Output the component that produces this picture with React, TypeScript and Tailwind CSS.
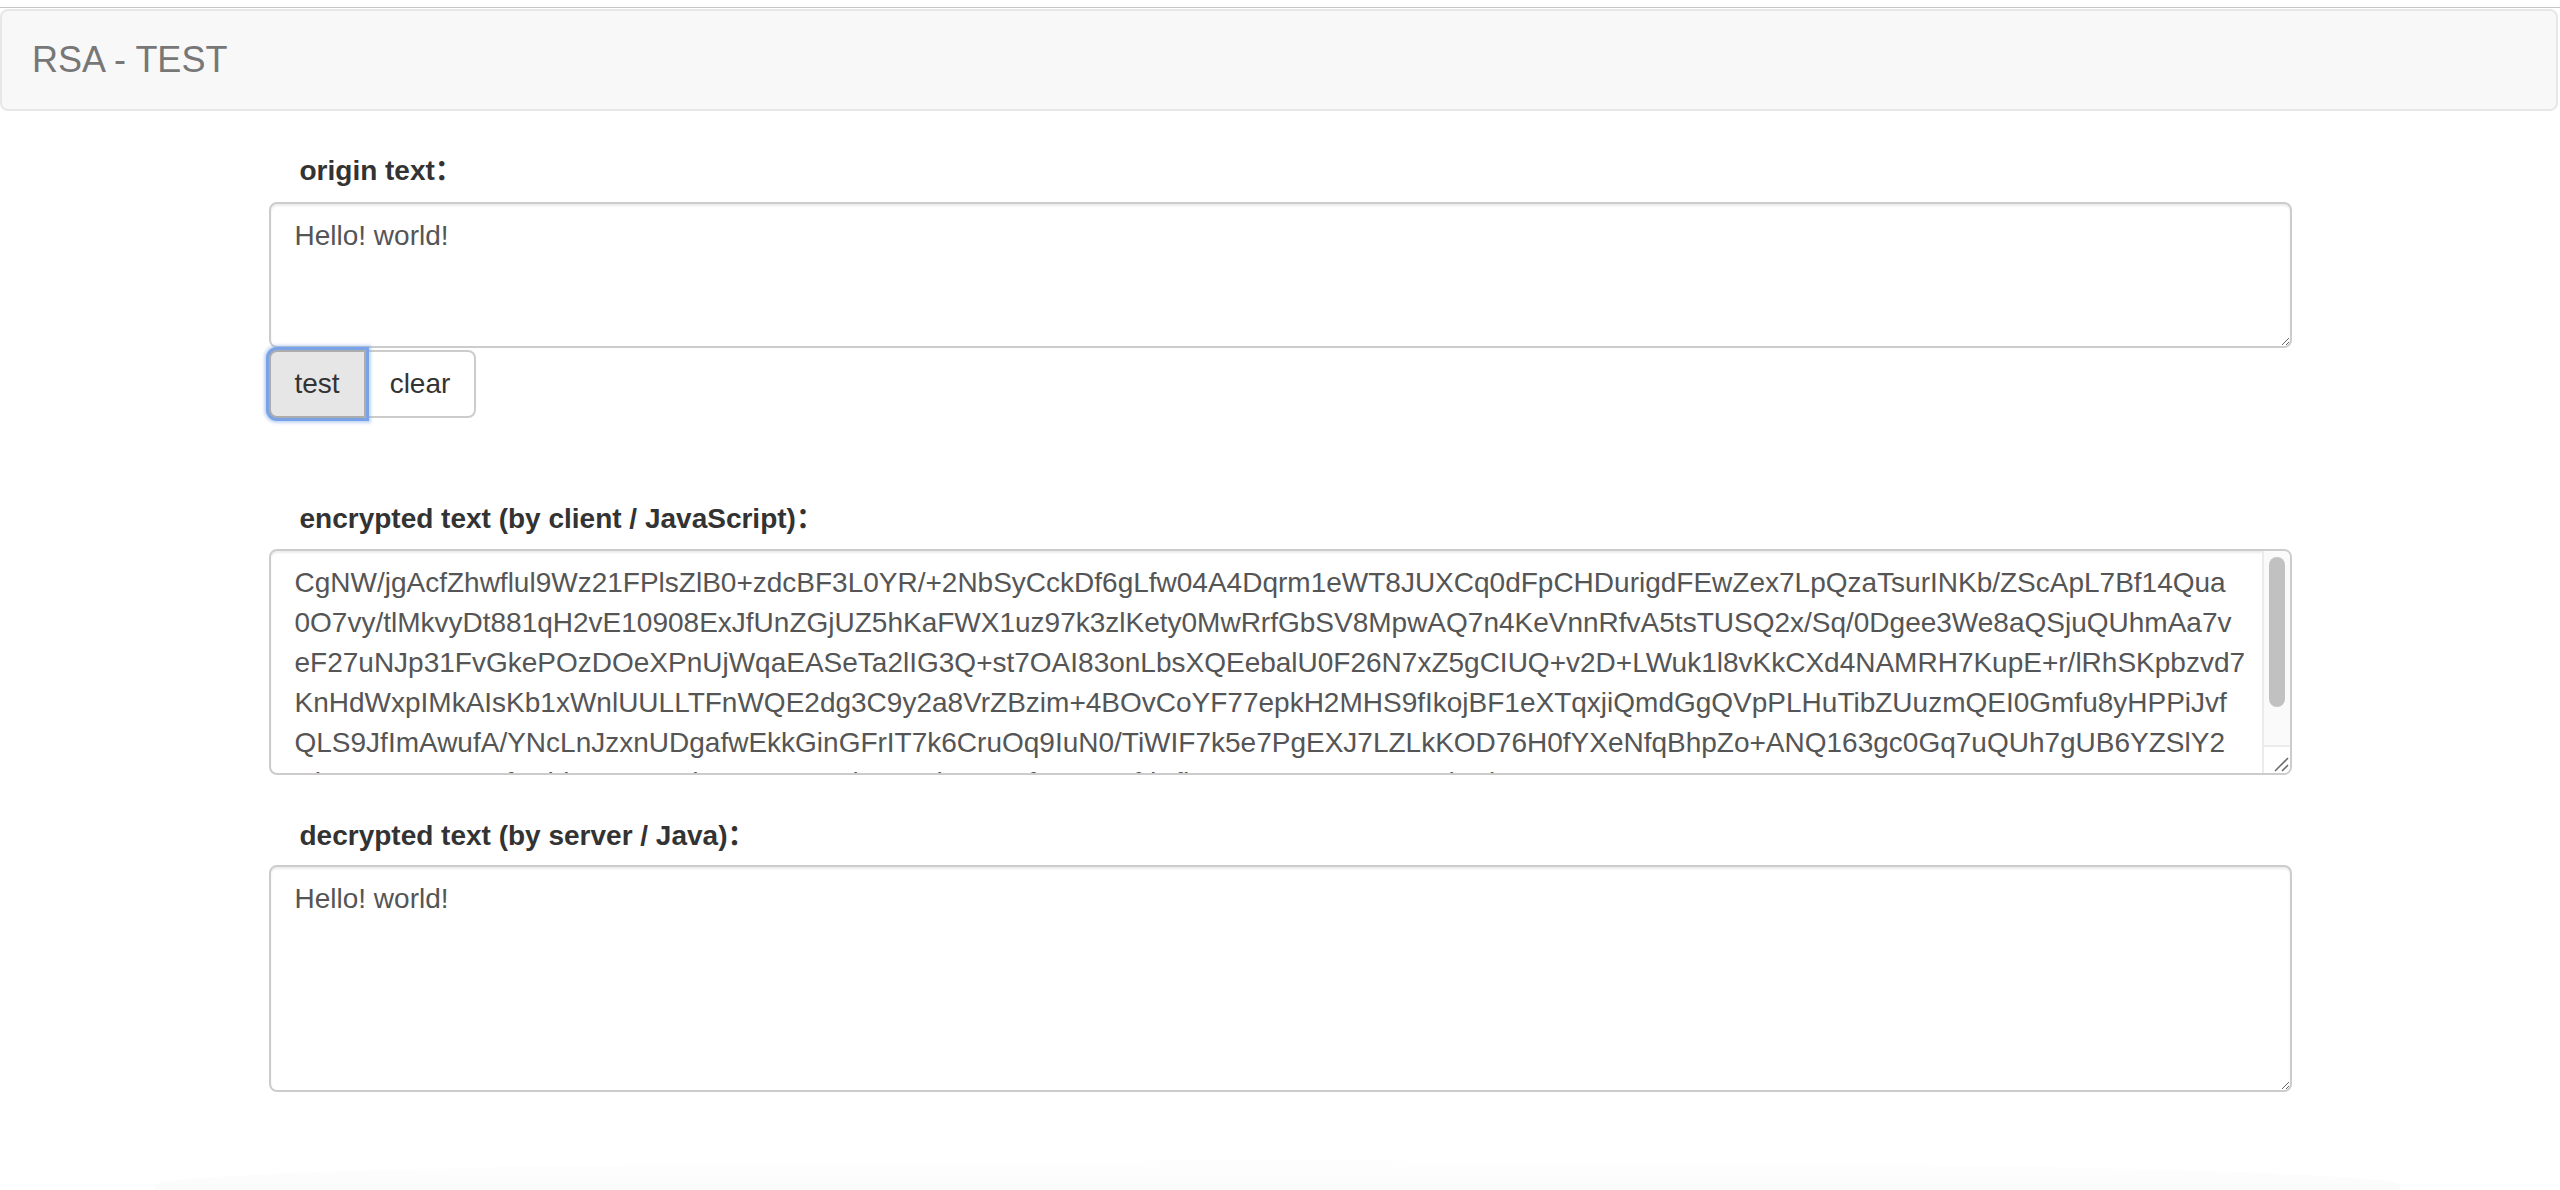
import React from "react";

const cipherLines = [
  "CgNW/jgAcfZhwflul9Wz21FPlsZlB0+zdcBF3L0YR/+2NbSyCckDf6gLfw04A4Dqrm1eWT8JUXCq0dFpCHDurigdFEwZex7LpQzaTsurINKb/ZScApL7Bf14Qua",
  "0O7vy/tlMkvyDt881qH2vE10908ExJfUnZGjUZ5hKaFWX1uz97k3zlKety0MwRrfGbSV8MpwAQ7n4KeVnnRfvA5tsTUSQ2x/Sq/0Dgee3We8aQSjuQUhmAa7v",
  "eF27uNJp31FvGkePOzDOeXPnUjWqaEASeTa2lIG3Q+st7OAI83onLbsXQEebalU0F26N7xZ5gCIUQ+v2D+LWuk1l8vKkCXd4NAMRH7KupE+r/lRhSKpbzvd7",
  "KnHdWxpIMkAIsKb1xWnlUULLTFnWQE2dg3C9y2a8VrZBzim+4BOvCoYF77epkH2MHS9fIkojBF1eXTqxjiQmdGgQVpPLHuTibZUuzmQEI0Gmfu8yHPPiJvf",
  "QLS9JfImAwufA/YNcLnJzxnUDgafwEkkGinGFrIT7k6CruOq9IuN0/TiWIF7k5e7PgEXJ7LZLkKOD76H0fYXeNfqBhpZo+ANQ163gc0Gq7uQUh7gUB6YZSlY2",
  "wlRTK53EVNNCfDchlIUGm3RxhMXm6pOWkyNQzbVAgr1fWrw3WfdKfhVtI0WwzzEz15WoHhnrl1QcKeA=",
];

const fieldBase =
  "block w-full rounded-[8px] border-2 border-[#cccccc] bg-white pl-[24px] py-[12px] text-[28px] leading-[40px] text-[#555555] shadow-[inset_0_2px_2px_rgba(0,0,0,0.075)] outline-none";

function FieldLabel({ children }: { children: React.ReactNode }) {
  return (
    <label className="block pl-[31px] font-bold text-[28px] leading-[40px] text-[#333333]">
      {children}
    </label>
  );
}

// Scroll column drawn over the right edge of the cipher box
function ScrollColumn() {
  return (
    <div className="pointer-events-none absolute bottom-[2px] right-[2px] top-[2px] flex w-[28px] flex-col overflow-hidden rounded-r-[6px]">
      <div className="flex-1 border-l-2 border-[#ebebeb] bg-[#fafafa] pt-[6px]">
        <div className="mx-auto h-[150px] w-[16px] rounded-full bg-[#c1c1c1]" />
      </div>
      <div className="h-[28px] border-l-2 border-t-2 border-[#ebebeb] bg-white">
        <svg width="26" height="26" viewBox="0 0 26 26" className="block">
          <line x1="24" y1="11" x2="11" y2="24" stroke="#6b6b6b" strokeWidth="1.6" />
          <line x1="24" y1="18" x2="18" y2="24" stroke="#6b6b6b" strokeWidth="1.6" />
        </svg>
      </div>
    </div>
  );
}

export default function App() {
  return (
    <div className="min-h-[1190px] bg-white font-['Liberation_Sans','Noto_Sans_CJK_SC',sans-serif] text-[28px] leading-[40px] text-[#333333]">
      <div className="h-[7px]" />
      <div className="h-px bg-[#c6c6c6]" />

      <nav className="mt-px flex h-[102px] w-[2558px] items-center rounded-[8px] border-2 border-[#e7e7e7] bg-[#f8f8f8] px-[30px]">
        <span className="text-[36px] leading-[40px] text-[#777777]">RSA - TEST</span>
      </nav>

      <main className="mx-auto w-[2023px] pt-[40px]">
        <FieldLabel>origin text：</FieldLabel>
        <textarea
          readOnly
          value="Hello! world!"
          className={`${fieldBase} mt-[11px] h-[146px] pr-[24px]`}
        />
        <div className="mt-[2px] flex">
          <button className="relative z-10 rounded-l-[8px] border-2 border-[#adadad] bg-[#e6e6e6] px-[24px] py-[12px] text-[28px] leading-[40px] text-[#333333] shadow-[0_0_0_3px_#79a3e6,0_0_3px_5px_rgba(121,163,230,0.45)]">
            test
          </button>
          <button className="-ml-[2px] rounded-r-[8px] border-2 border-[#cccccc] bg-white px-[24px] py-[12px] text-[28px] leading-[40px] text-[#333333]">
            clear
          </button>
        </div>

        <div className="mt-[81px]">
          <FieldLabel>encrypted text (by client / JavaScript)：</FieldLabel>
        </div>
        <div className="relative mt-[10px]">
          <textarea
            readOnly
            wrap="off"
            value={cipherLines.join("\n")}
            className={`${fieldBase} h-[226px] overflow-hidden pr-[54px]`}
          />
          <ScrollColumn />
        </div>

        <div className="mt-[41px]">
          <FieldLabel>decrypted text (by server / Java)：</FieldLabel>
        </div>
        <textarea
          readOnly
          value="Hello! world!"
          className={`${fieldBase} mt-[9px] h-[227px] pr-[24px]`}
        />
      </main>

      <div className="ml-[155px] mr-[160px] mt-[68px] h-[30px] rounded-t-[60%_100%] bg-gradient-to-b from-[#fefefe] to-[#fbfbfb]" />
    </div>
  );
}
